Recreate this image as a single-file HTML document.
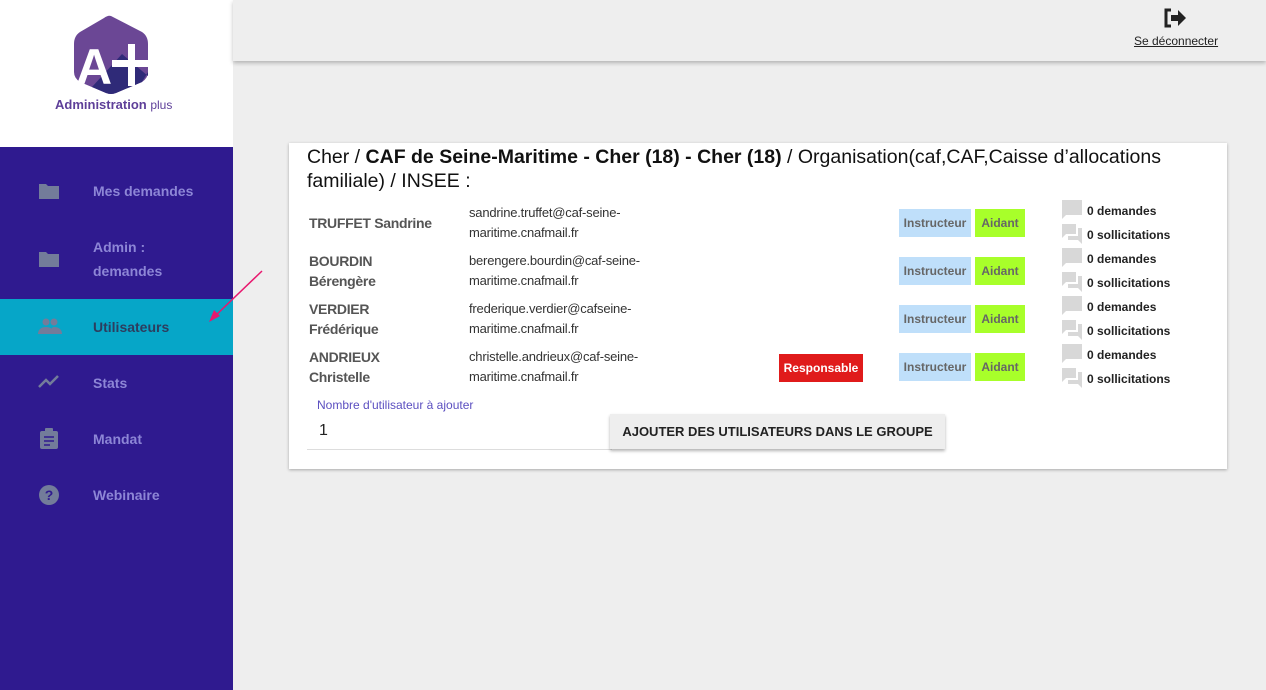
<!DOCTYPE html>
<html><head><meta charset="utf-8"><style>
*{margin:0;padding:0;box-sizing:border-box}
body{width:1266px;height:690px;overflow:hidden;background:#eeeeee;font-family:"Liberation Sans",Arial,sans-serif;position:relative}
.a{position:absolute}
.side{left:0;top:147px;width:233px;height:543px;background:#2f1a8f}
.logo{left:0;top:0;width:233px;height:147px;background:#fff}
.nav{position:absolute;left:93px;color:#8d86d6;font-weight:bold;font-size:14px;line-height:24px}
.ico{position:absolute;left:38px}
.top{left:233px;top:0;width:1033px;height:61px;background:#eeeeee;box-shadow:0 2px 4px rgba(0,0,0,.25)}
.card{left:289px;top:143px;width:938px;height:326px;background:#fff;box-shadow:0 1px 3px rgba(0,0,0,.3)}
.name{position:absolute;left:20px;font-weight:bold;font-size:14px;color:#555;line-height:20px;letter-spacing:-0.3px}
.mail{position:absolute;left:180px;font-size:13px;color:#333;line-height:20px;letter-spacing:-0.2px}
.b{position:absolute;height:28px;font-weight:bold;font-size:12px;color:#666;text-align:center;line-height:28px}
.ins{left:610px;width:72px;background:#bfdffa}
.aid{left:686px;width:50px;background:#a8ff2a}
.st{position:absolute;left:798px;font-weight:bold;font-size:12px;color:#222;line-height:24px}
.ch{position:absolute;left:773px}
</style></head><body>
<div class="a logo">
<svg class="a" style="left:72px;top:14px" width="78" height="80" viewBox="0 0 78 80">
<path d="M39 2 L70 18 Q76 22 76 30 L76 58 Q76 64 70 68 L44 79 Q39 81 34 79 L8 68 Q2 64 2 58 L2 30 Q2 22 8 18 L32 4 Q36 1 39 2Z" fill="#6b4795"/>
<path d="M50 40 L76 62 L76 58 L70 68 L44 79 Q39 81 34 79 L20 73Z" fill="#2f2a78"/>
<text x="4" y="70" font-family="Liberation Sans" font-weight="bold" font-size="50" fill="#fff">A</text>
<rect x="40" y="46" width="36" height="7" fill="#fff"/><rect x="56" y="30" width="7" height="42" fill="#fff"/>
</svg>
<div class="a" style="left:55px;top:97px;font-size:13px;font-weight:bold;color:#5e3f99">Administration <span style="font-size:12px;font-weight:normal">plus</span></div>
</div>
<div class="a side"></div>
<div class="a" style="left:0;top:299px;width:233px;height:56px;background:#06a6c8"></div>
<svg class="ico" style="top:182px" width="22" height="18"><path d="M1 2h7l2 2h11v13H1z" fill="#737c9a"/></svg>
<div class="nav" style="top:179px">Mes demandes</div>
<svg class="ico" style="top:250px" width="22" height="18"><path d="M1 2h7l2 2h11v13H1z" fill="#737c9a"/></svg>
<div class="nav" style="top:235px">Admin :<br>demandes</div>
<svg class="ico" style="top:318px" width="24" height="16"><circle cx="8" cy="4" r="3.5" fill="#737c9a"/><circle cx="16" cy="4" r="3.5" fill="#737c9a"/><path d="M0 16c0-5 4-7 8-7s8 2 8 7zM12 16c0-4 2-7 4-7 4 0 8 2 8 7z" fill="#737c9a"/></svg>
<div class="nav" style="top:315px;color:#2d3d5e">Utilisateurs</div>
<svg class="ico" style="top:375px" width="22" height="14"><path d="M1 12l7-7 4 4 8-8" stroke="#737c9a" stroke-width="2.5" fill="none"/></svg>
<div class="nav" style="top:371px">Stats</div>
<svg class="ico" style="top:428px" width="22" height="22"><rect x="2" y="3" width="18" height="18" rx="2" fill="#737c9a"/><rect x="7" y="0" width="8" height="5" rx="1" fill="#737c9a"/><path d="M6 9h10M6 13h10M6 17h6" stroke="#2f1a8f" stroke-width="1.6"/></svg>
<div class="nav" style="top:427px">Mandat</div>
<svg class="ico" style="top:484px" width="22" height="22"><circle cx="11" cy="11" r="10" fill="#737c9a"/><text x="11" y="16" text-anchor="middle" font-family="Liberation Sans" font-weight="bold" font-size="14" fill="#2f1a8f">?</text></svg>
<div class="nav" style="top:483px">Webinaire</div>
<svg class="a" style="left:205px;top:268px" width="60" height="56"><path d="M57 3 L8 50" stroke="#e8186e" stroke-width="1.5"/><path d="M4 54 L9 42 L15 48Z" fill="#e8186e"/></svg>
<div class="a top"></div>
<svg class="a" style="left:1163px;top:8px" width="24" height="20"><path d="M8 2H3v16h5" stroke="#222" stroke-width="3" fill="none"/><path d="M8 7h7V2l8 8-8 8v-5H8z" fill="#222"/></svg>
<div class="a" style="left:1134px;top:34px;font-size:12px;color:#222;text-decoration:underline">Se déconnecter</div>
<div class="a card">
<div class="a" style="left:18px;top:2px;font-size:19.5px;line-height:24px;color:#111;white-space:nowrap">Cher / <b>CAF de Seine-Maritime - Cher (18) - Cher (18)</b> / Organisation(caf,CAF,Caisse d’allocations<br>familiale) / INSEE :</div>
<div class="name" style="top:70px">TRUFFET Sandrine</div>
<div class="mail" style="top:60px">sandrine.truffet@caf-seine-<br>maritime.cnafmail.fr</div>
<div class="name" style="top:108px">BOURDIN<br>Bérengère</div>
<div class="mail" style="top:108px">berengere.bourdin@caf-seine-<br>maritime.cnafmail.fr</div>
<div class="name" style="top:156px">VERDIER<br>Frédérique</div>
<div class="mail" style="top:156px">frederique.verdier@cafseine-<br>maritime.cnafmail.fr</div>
<div class="name" style="top:204px">ANDRIEUX<br>Christelle</div>
<div class="mail" style="top:204px">christelle.andrieux@caf-seine-<br>maritime.cnafmail.fr</div>
<div class="b" style="left:490px;top:211px;width:84px;background:#e01b1b;color:#fff">Responsable</div>
<div class="b ins" style="top:66px">Instructeur</div><div class="b aid" style="top:66px">Aidant</div>
<div class="b ins" style="top:114px">Instructeur</div><div class="b aid" style="top:114px">Aidant</div>
<div class="b ins" style="top:162px">Instructeur</div><div class="b aid" style="top:162px">Aidant</div>
<div class="b ins" style="top:210px">Instructeur</div><div class="b aid" style="top:210px">Aidant</div>
<svg class="ch" style="top:57px" width="22" height="190">
<g fill="#d8d8d8">
<path d="M0 0h20v15H4l-4 4z"/><path d="M0 24h14v10H4l-4 4z M16 28h4v16l-4-4H6v-4h10z"/>
<path d="M0 48h20v15H4l-4 4z"/><path d="M0 72h14v10H4l-4 4z M16 76h4v16l-4-4H6v-4h10z"/>
<path d="M0 96h20v15H4l-4 4z"/><path d="M0 120h14v10H4l-4 4z M16 124h4v16l-4-4H6v-4h10z"/>
<path d="M0 144h20v15H4l-4 4z"/><path d="M0 168h14v10H4l-4 4z M16 172h4v16l-4-4H6v-4h10z"/>
</g></svg>
<div class="st" style="top:56px">0 demandes<br>0 sollicitations</div>
<div class="st" style="top:104px">0 demandes<br>0 sollicitations</div>
<div class="st" style="top:152px">0 demandes<br>0 sollicitations</div>
<div class="st" style="top:200px">0 demandes<br>0 sollicitations</div>
<div class="a" style="left:28px;top:255px;font-size:12px;color:#5b4fc0">Nombre d'utilisateur à ajouter</div>
<div class="a" style="left:30px;top:279px;font-size:16px;color:#222">1</div>
<div class="a" style="left:18px;top:306px;width:305px;height:1px;background:#ddd"></div>
<div class="a" style="left:321px;top:271px;width:335px;height:35px;background:#eeeeee;box-shadow:0 2px 3px rgba(0,0,0,.3);font-size:13px;font-weight:bold;color:#222;text-align:center;line-height:35px">AJOUTER DES UTILISATEURS DANS LE GROUPE</div>
</div>
</body></html>
